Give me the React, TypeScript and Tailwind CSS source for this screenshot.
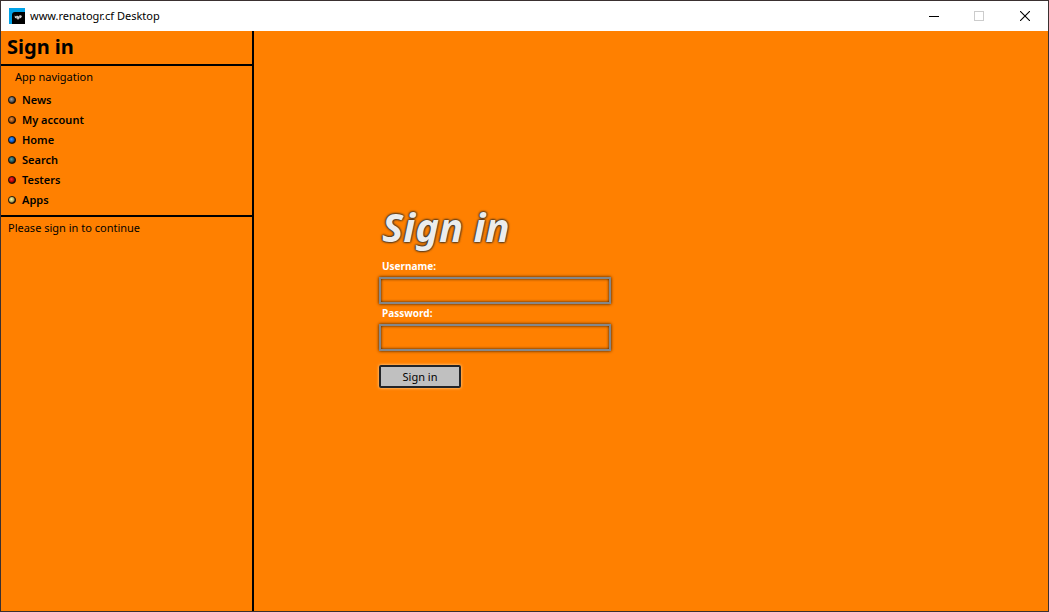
import { useId } from 'react';

type NavItem = { label: string; light: string; base: string };

const navItems: NavItem[] = [
  { label: 'News', light: '#a0a0a0', base: '#585858' },
  { label: 'My account', light: '#e89040', base: '#a05010' },
  { label: 'Home', light: '#3c9cff', base: '#0c58c8' },
  { label: 'Search', light: '#5c9c9c', base: '#245858' },
  { label: 'Testers', light: '#ff3030', base: '#b80000' },
  { label: 'Apps', light: '#f8f8a0', base: '#b0a85c' },
];

function Bullet({ light, base }: { light: string; base: string }) {
  const id = useId();
  return (
    <svg width="8" height="8" viewBox="0 0 8 8" aria-hidden="true" className="shrink-0">
      <defs>
        <radialGradient id={id} cx="0.42" cy="0.4" r="0.62">
          <stop offset="0" stopColor={light} />
          <stop offset="0.55" stopColor={base} />
          <stop offset="0.9" stopColor="#140c08" />
        </radialGradient>
      </defs>
      <circle cx="4" cy="4" r="3.6" fill={`url(#${id})`} stroke="#140c08" strokeWidth="0.8" />
    </svg>
  );
}

function AppLogo() {
  return (
    <svg width="16" height="16" viewBox="0 0 16 16" aria-hidden="true" className="shrink-0">
      <rect width="16" height="16" fill="#00a2e8" />
      <path d="M3 16V7Q3 4 6 4H16V16Z" fill="#000" />
      <path d="M5.5 7.5L7 8.5L8 7.5L9.5 8.5L11 7L13 8L12 10L10 10.5L9 12L8 10.5L6 10Z" fill="#d0d0d0" />
      <path d="M7 9L8.5 10M10.5 8.5V10" stroke="#777" strokeWidth="0.6" />
    </svg>
  );
}

function TitleBar() {
  return (
    <header className="flex h-[30px] shrink-0 items-center bg-white pl-2">
      <AppLogo />
      <span className="ml-[5px] text-[11px] leading-4">www.renatogr.cf Desktop</span>
      <div className="ml-auto flex h-full">
        <button type="button" aria-label="Minimize" className="flex w-[45px] items-center justify-center">
          <svg width="10" height="10" viewBox="0 0 10 10" shapeRendering="crispEdges">
            <path d="M0 5.5H10" stroke="#000" />
          </svg>
        </button>
        <button type="button" aria-label="Maximize" disabled className="flex w-[46px] items-center justify-center">
          <svg width="10" height="10" viewBox="0 0 10 10" shapeRendering="crispEdges">
            <path d="M0.5 0.5H9.5V9.5H0.5Z" stroke="#ccc" fill="none" />
          </svg>
        </button>
        <button type="button" aria-label="Close" className="flex w-[46px] items-center justify-center">
          <svg width="10" height="10" viewBox="0 0 10 10">
            <path d="M0 0L10 10M10 0L0 10" stroke="#000" strokeWidth="1.1" />
          </svg>
        </button>
      </div>
    </header>
  );
}

function Sidebar() {
  return (
    <aside className="w-[253px] shrink-0 border-r-2 border-black text-[11px] leading-4">
      <h1 className="h-[35px] border-b-2 border-black pl-[6px] text-[20px] leading-8 font-bold">Sign in</h1>
      <nav aria-label="App navigation" className="border-b-2 border-black pt-[3px] pb-[5px]">
        <p className="mb-[5px] pl-[14px]">App navigation</p>
        <ul>
          {navItems.map((item) => (
            <li key={item.label}>
              <a href="#" className="flex h-5 items-center gap-[6px] pl-[7px] font-semibold">
                <Bullet light={item.light} base={item.base} />
                {item.label}
              </a>
            </li>
          ))}
        </ul>
      </nav>
      <p className="pt-[3px] pl-[7px]">Please sign in to continue</p>
    </aside>
  );
}

function Field({ id, label, type }: { id: string; label: string; type: string }) {
  return (
    <div className="flex flex-col">
      <label htmlFor={id} className="h-[19px] pl-[3px] text-[10px] leading-4 font-bold text-white">
        {label}
      </label>
      <input
        id={id}
        type={type}
        className="mb-px h-[27px] w-full border-2 border-[#84878a] bg-transparent px-1 text-[12px] shadow-[0_0_3px_#301800,inset_0_0_3px_#301800] outline-none"
      />
    </div>
  );
}

export default function App() {
  return (
    <div className="flex h-screen flex-col border border-[#3a3030] bg-[#ff8000] font-['Noto_Sans',sans-serif] text-black">
      <TitleBar />
      <div className="flex min-h-0 flex-1">
        <Sidebar />
        <main className="flex-1 pt-[172px] pl-[125px]">
          <form className="w-[232px]" onSubmit={(e) => e.preventDefault()}>
            <h2 className="h-[55px] pl-[3px] text-[40px] leading-[48px] font-bold text-[#ececec] italic [text-shadow:0_0_2px_#222,0_0_2px_#222,0_0_3px_#333]">
              Sign in
            </h2>
            <Field id="username" label="Username:" type="text" />
            <Field id="password" label="Password:" type="password" />
            <button
              type="submit"
              className="mt-[13px] h-[23px] w-[82px] rounded-[2px] border-2 border-[#222428] bg-[#c0c0c0] text-[11px] leading-4 shadow-[0_0_3px_#ffe0b0]"
            >
              Sign in
            </button>
          </form>
        </main>
      </div>
    </div>
  );
}
